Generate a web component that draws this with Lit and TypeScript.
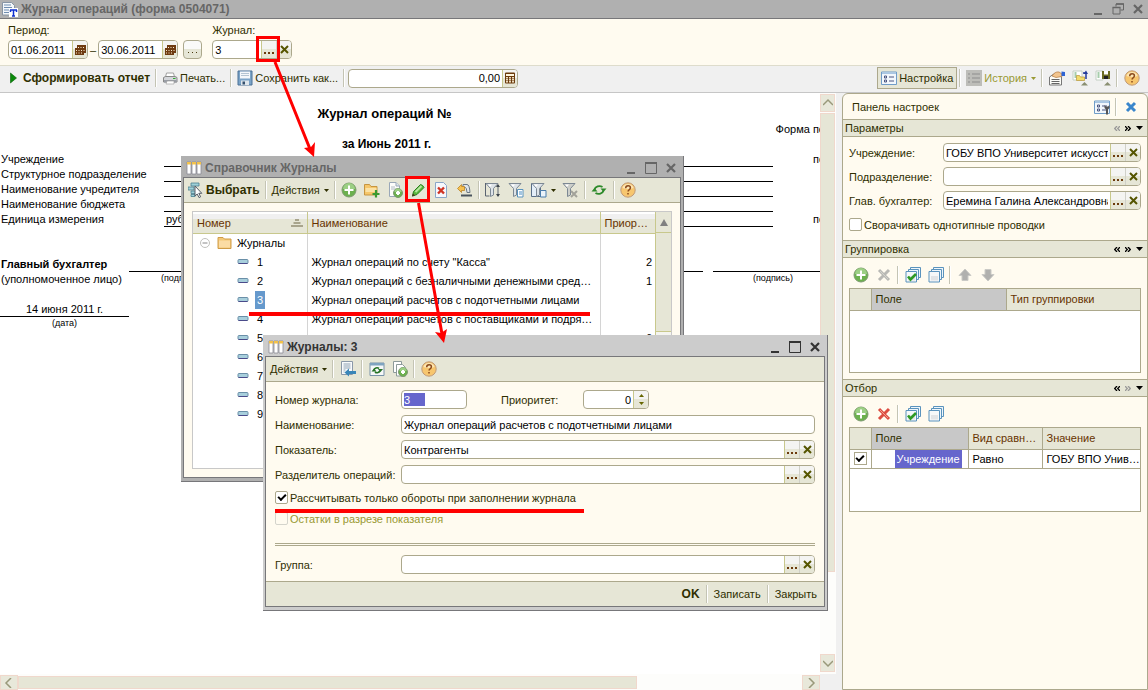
import { LitElement, html, svg, css, nothing, TemplateResult } from "lit";
import { customElement } from "lit/decorators.js";
import { classMap } from "lit/directives/class-map.js";

const icon = (content: unknown, w = 16) =>
  html`<svg class="icon" width=${w} height="16" viewBox="0 0 ${w} 16" aria-hidden="true">${content}</svg>`;

const plusDisc = (cx: number, cy: number, r: number) => svg`
  <circle cx=${cx} cy=${cy} r=${r} fill="#6cb04e" stroke="#7d9a70" />
  <path d="M${cx - r + 1} ${cy - 1}a${r - 1} ${r - 1} 0 0 1 ${2 * r - 2} 0z" fill="#9ccf84" />
  <path d="M${cx} ${cy - r + 2.5}V${cy + r - 2.5}M${cx - r + 2.5} ${cy}H${cx + r - 2.5}" stroke="#fff" stroke-width="2" />`;

const sheetPath = svg`<path d="M2.500 .5h6.500l3.500 3.500v10.500h-10z" fill="#fdfdfb" stroke="#9aa8b8" /><path d="M9 .5v3.500h3.500" fill="#dfe6ee" stroke="#9aa8b8" />`;
const funnel = (c: string) => svg`<path d="M1 1.500h12l-4.500 5v6.500l-3 1.500v-8z" fill=${c} stroke="#7c8894" /><path d="M3 2.500h4l-2 2.500z" fill="#fff" />`;
const stack = svg`
  <path d="M5.500 .5h10v10h-10z" fill="#eef6fb" stroke="#5a93bd" />
  <path d="M3.500 2.500h10v10h-10z" fill="#eef6fb" stroke="#5a93bd" />
  <path d="M1 4.500h10.500v10.500h-10.500z" fill="#f6f8f9" stroke="#5a93bd" />
  <path d="M3 9h7v4.500h-7z" fill="#e2e4e6" />`;
const listBox = svg`
  <path d="M.5 2h15v12.500h-15z" fill="#f2f7fc" stroke="#6f9cc8" />
  <path d="M1 2.500h14v1.500h-14z" fill="#a9c6e2" />
  <path d="M3.500 6h2v2h-2zM3.500 10h2v2h-2z" fill="none" stroke="#4a5580" />
  <path d="M8 7h5M8 11h5" stroke="#4a5580" />`;

const I = {
  report: svg`<path d="M.5 1.500h9l3 3v9.500h-12z" fill="#f4f7fa" stroke="#8794a4" /><path d="M2 4h7M2 6.500h8M2 9h6M2 11.500h5" stroke="#6f8db0" /><path d="M7 7h9v9h-9z" fill="#fff" /><path d="M8 9h7M11.500 9v6M10 15h3M8.500 9v2M14.500 9v2" stroke="#1030d0" stroke-width="1.500" />`,
  columns: svg`<path d="M1 2h4v12h-4zM6 2h4v12h-4zM11 2h4v12h-4z" fill="#fff" stroke="#8a8a94" stroke-width=".8" /><path d="M1 2h4v2.500h-4zM6 2h4v2.500h-4zM11 2h4v2.500h-4z" fill="#f3c24a" />`,
  run: svg`<path d="M5.500 3l6 5-6 5z" fill="#0a8a0a" stroke="#056005" stroke-width=".6" />`,
  printer: svg`<path d="M4.500 3h7l1 4h-9z" fill="#fff" stroke="#a0a0a0" /><path d="M1.500 7.500l2-1h9.500l2 1v4.500h-13.500z" fill="#d4d6da" stroke="#888" /><path d="M2 10h12.500v2.500h-12.500z" fill="#9a9ea6" /><path d="M5 11h7v3h-8z" fill="#fff" stroke="#999" stroke-width=".6" /><path d="M11 8.500h2.500" stroke="#3a3" />`,
  floppy: svg`<path d="M1 1h14v14h-14z" fill="#7ba4c8" stroke="#4a7096" /><path d="M3 1.500h10v7h-10z" fill="#f4f7fa" /><path d="M4 3.500h8M4 5.500h8" stroke="#b4c4d2" /><path d="M4 10.500h8v4.500h-8z" fill="#dfe6ec" /><path d="M5.500 11.500h2.500v3h-2.500z" fill="#34506e" />`,
  calc: svg`<path d="M3 3.500q0-1 1-1h8q1 0 1 1v9q0 1-1 1h-8q-1 0-1-1z" fill="#6b3a0c" /><path d="M4 4h8v2h-8z" fill="#fff6de" /><path d="M4 7h2v1.500h-2zM7 7h2v1.500h-2zM10 7h2v1.500h-2zM4 9h2v1.500h-2zM7 9h2v1.500h-2zM10 9h2v1.500h-2zM4 11h2v1.500h-2zM7 11h2v1.500h-2zM10 11h2v1.500h-2z" fill="#ecdcc0" />`,
  calendar: svg`<path d="M5 3h9v8h-2v2h-9v-7h2z" fill="#6e3a10" /><path d="M6 5h1v1h-1zM8.500 5h1v1h-1zM11 5h1v1h-1zM4 8h1v1h-1zM6.500 8h1v1h-1zM9 8h1v1h-1zM11.500 8h1v1h-1zM4 10.500h1v1h-1zM6.500 10.500h1v1h-1zM9 10.500h1v1h-1z" fill="#f6ead0" />`,
  settings: listBox,
  history: svg`<path d="M0 0h16v16h-16z" fill="#bdbdb9" /><path d="M2 4h2M2 8h2M2 12h2M6 4h8M6 8h8M6 12h8" stroke="#8d8d8d" stroke-width="1.200" />`,
  panelTools: svg`${listBox}<path d="M10.500 6v3l1.500 1.500v5h2v-5l1.500-1.500v-3l-1.500 1.500h-2z" fill="#555" />`,
  handForm: svg`<path d="M.5 7l5-3.500 7 3.500v8h-12z" fill="#fcfcf8" stroke="#777" /><path d="M2.500 9.500h8M2.500 11.500h8M2.500 13.500h8" stroke="#666" /><path d="M3 6c2-3 4-4.500 7-4l3 2v2.500l-6 1z" fill="#f2c48e" stroke="#b0763c" stroke-width=".7" /><path d="M12.500 1.500l3.500 .5v4h-3.500z" fill="#2e63d4" />`,
  loadForm: svg`<path d="M1 1h9v9h-9z" fill="#fff" stroke="#c4d0c4" /><path d="M2.500 3h2M2.500 5h2M2.500 7h2" stroke="#4f9a58" /><path d="M4.500 5.500h3l1 1.500h4v3.500h-8z" fill="#f3dc6c" stroke="#b8963a" stroke-width=".7" /><path d="M14 9v-6h-3" fill="none" stroke="#243c9c" stroke-width="1.500" /><path d="M11.500 4l2.500-3.500 2 3.500z" fill="#243c9c" /><path d="M9 15.500h7l-3.500-3.500z" fill="#8a8f72" />`,
  saveForm: svg`<path d="M1 1h7v9h-7z" fill="#fff" stroke="#c4d0c4" /><path d="M2.500 3h2M2.500 5h2M2.500 7h2" stroke="#4f9a58" /><path d="M7 1h8v8h-8z" fill="#6c6c22" /><path d="M9 1h4v3.500h-4z" fill="#fff" /><path d="M9 6h4v3h-4z" fill="#222" /><path d="M9 15.500h7l-3.500-3.500z" fill="#8a8f72" />`,
  help: svg`<circle cx="8" cy="8" r="7.200" fill="#f7c66e" stroke="#c09a78" /><path d="M2.500 6a5.800 5.800 0 0 1 11 0q-5 2-11 0z" fill="#fde6b4" /><path d="M5.700 6.200q0-2.400 2.400-2.400 2.300 0 2.300 2 0 1.300-1.300 2-1 .6-1 1.700M8 11v1.600" fill="none" stroke="#8a4a1c" stroke-width="1.500" />`,
  closeBlue: svg`<path d="M4 4l8 8M12 4l-8 8" stroke="#3a86cc" stroke-width="3" />`,
  add: plusDisc(8, 8, 7),
  crossGrey: svg`<path d="M3 3l10 10M13 3l-10 10" stroke="#b8b8b4" stroke-width="3" /><path d="M4 4l8 8" stroke="#d2d2cc" />`,
  crossRed: svg`<path d="M3 3l10 10M13 3l-10 10" stroke="#dc4c40" stroke-width="3" /><path d="M4 4l8 8" stroke="#f39a8c" />`,
  checkAll: svg`${stack}<path d="M3 9.500l2.500 3 5.500-5.500" fill="none" stroke="#2f9a24" stroke-width="2.600" />`,
  uncheckAll: stack,
  up: svg`<path d="M8 2l6 6.500h-3v5h-6v-5h-3z" fill="#b0b0ae" stroke="#cacac6" />`,
  down: svg`<path d="M8 14l6-6.500h-3v-5h-6v5h-3z" fill="#b0b0ae" stroke="#cacac6" />`,
  select: svg`<path d="M3 1h8v3h-8zM0 5h6v3h-6zM3 9h5v2.500h-5zM3 12.500h4v2h-4z" fill="#9fd0d8" stroke="#4a7f8f" stroke-width=".8" /><path d="M7 4v10l2.200-2 1.800 3.600 1.600-.8-1.800-3.500h3z" fill="#fff" stroke="#555c66" />`,
  folderAdd: svg`<path d="M.5 2.500h5l1.500 2h6v8.500h-12.500z" fill="#f6c76a" stroke="#c69540" /><path d="M1.500 6h11v4h-11z" fill="#fbe2a4" /><path d="M12 8v7.500M8.500 12h7" stroke="#3a9a30" stroke-width="2.200" />`,
  docAdd: svg`${sheetPath}<path d="M4 5h4M4 7h5" stroke="#b0bac4" />${plusDisc(11, 11, 4.5)}`,
  pencil: svg`<path d="M3.500 9.500l7-7q2.500 .5 3.500 3l-7 7-4.500 1.500z" fill="#58b83c" stroke="#2c7c1e" /><path d="M5.500 10l6-6" stroke="#b6e6a0" stroke-width="2" /><path d="M2 14.500l1-3 2 2z" fill="#4a3a20" />`,
  docDel: svg`<path d="M2.500 .5h8l3 3v12h-11z" fill="#f6f8fc" stroke="#8aa6c8" /><path d="M5 5.500l6 6M11 5.500l-6 6" stroke="#d03424" stroke-width="2.400" />`,
  reload: svg`<path d="M7 2.500h4q2.500 0 3 8h-3q-.5-5-1.500-5h-2.500z" fill="#dfe5ea" stroke="#6c7884" /><path d="M5 13.500h11" stroke="#4a545e" stroke-width="2" /><path d="M1.500 6.500l4-4v2h3v4h-3v2z" fill="#f6c04e" stroke="#b98428" stroke-width=".8" />`,
  funnelMove: svg`${funnel("#dde3e8")}<path d="M.5 1v13h4M13 3v11" fill="none" stroke="#5a6470" /><path d="M11 5l2-3 2 3zM11 12l2 3 2-3z" fill="#3c444c" />`,
  funnelDoc: svg`${funnel("#dde3e8")}<path d="M9.500 7.500h5.500v7.500h-5.500z" fill="#fff" stroke="#5a93bd" /><path d="M11 10h3M11 12h3" stroke="#4a8ec4" />`,
  funnelList: svg`<path d="M.5 1.500h9v13h-9z" fill="#e4eef8" stroke="#5a6f88" />${funnel("#dde3e8")}<path d="M9.500 8.500h5.500v6.500h-5.500z" fill="#eaf3fa" stroke="#4a7cab" />`,
  funnelOff: svg`${funnel("#cdcfca")}<path d="M9 9l6 6M15 9l-6 6" stroke="#a2a29a" stroke-width="2" />`,
  refresh: svg`<path d="M3.500 7.500a5 4 0 0 1 8-2.500M12.500 8.500a5 4 0 0 1-8 2.500" fill="none" stroke="#2d8a2a" stroke-width="1.800" /><path d="M9.500 6.500h6l-3 3.500zM.5 9.500h6l-3-3.500z" fill="#2d8a2a" />`,
  postBack: svg`<path d="M1.500 .5h11v13h-11z" fill="#f8fafc" stroke="#8a98a8" /><path d="M3.500 3h7M3.500 5h7M3.500 7h7M3.500 9h2M3.500 11h1" stroke="#8fa2b4" /><path d="M4.500 11.500l4.500-4v2.500h7v3h-7v2.500z" fill="#3a86b8" />`,
  formRefresh: svg`<path d="M1 2h14v12.500h-14z" fill="#f6f8f8" stroke="#7892a8" /><path d="M1 2h14v2.500h-14z" fill="#7fa4c0" /><path d="M5 9a3 2.500 0 0 1 5-1.500M11 9.500a3 2.500 0 0 1-5 1.500" fill="none" stroke="#267326" stroke-width="1.600" /><path d="M9 8h5l-2.500 3zM2.500 10.500h5l-2.500-3z" fill="#267326" />`,
  docsAdd: svg`<path d="M1.500 .5h8v11h-8z" fill="#fff" stroke="#8d9a9a" /><path d="M4.500 3.500h6l3 3v8.500h-9z" fill="#fff" stroke="#8d9a9a" />${plusDisc(11, 11, 4.5)}`,
  folder: svg`<path d="M1 2.500h5l1.500 1.500h6.500v9.500h-13z" fill="#f3c878" stroke="#cf9c48" /><path d="M2 5.500h11v7h-11z" fill="#fbdca4" />`,
  item: svg`<path d="M3 6.500q0-1 1-1h8q1 0 1 1v2q0 1-1 1h-8q-1 0-1-1z" fill="#a8cfdc" stroke="#6a8fa8" /><path d="M3.500 9.500h9" stroke="#4a4a8a" />`,
  collapse: svg`<circle cx="8" cy="8" r="4.500" fill="#fff" stroke="#c0c0bc" /><path d="M5.500 8h5" stroke="#888" />`,
};

const dots = html`<svg class="glyph" width="11" height="10" viewBox="0 0 11 10" aria-hidden="true"><path d="M0 7h2v2h-2zM4 7h2v2h-2zM8 7h2v2h-2z" fill="#6b3a0c" /></svg>`;
const smallDots = html`<svg class="glyph" width="9" height="10" viewBox="0 0 9 10" aria-hidden="true"><path d="M0 7h1v1h-1zM4 7h1v1h-1zM8 7h1v1h-1z" fill="#4a3a10" /></svg>`;
const cross = html`<svg class="glyph" width="9" height="9" viewBox="0 0 9 9" aria-hidden="true"><path d="M1 1l7 7M8 1l-7 7" stroke="#555500" stroke-width="2" /></svg>`;
const caret = html`<svg class="caret" width="5" height="3" viewBox="0 0 5 3" aria-hidden="true"><path d="M0 0h5L2.500 3z" fill="currentColor" /></svg>`;
const sep = html`<span class="sep"></span>`;

const tool = (title: string, glyph: unknown) => html`<button class="tool" title=${title}>${icon(glyph)}</button>`;

const windowButtons = (kind: "max" | "restore") => html`<span class="win-buttons">
  <button title="Свернуть"><svg width="12" height="12" viewBox="0 0 12 12"><path d="M2 11h8" stroke="currentColor" stroke-width="2" /></svg></button>
  <button title="Развернуть"><svg width="12" height="12" viewBox="0 0 12 12">${kind === "max"
    ? svg`<path d="M.5 1h11M.5 .5v11h11v-11" fill="none" stroke="currentColor" /><path d="M0 1h12" stroke="currentColor" stroke-width="2" />`
    : svg`<path d="M4 3.500v-2.500h7.500v6h-3M1 4.500h7v6.500h-7z" fill="none" stroke="currentColor" /><path d="M4 1h8M.5 4.500h8" stroke="currentColor" stroke-width="1.500" />`}</svg></button>
  <button title="Закрыть"><svg width="12" height="12" viewBox="0 0 12 12"><path d="M2 2l8 8M10 2l-8 8" stroke="currentColor" stroke-width="2.200" /></svg></button>
</span>`;

const field = (id: string, value: string, buttons: TemplateResult | typeof nothing = nothing, kind = "") =>
  html`<span class="field ${kind}"><input id=${id} type="text" .value=${value} />${buttons}</span>`;

const pickClear = html`<button class="in" title="Выбрать">${dots}</button><button class="in split" title="Очистить">${cross}</button>`;
const calendarButton = html`<button class="in" title="Календарь">${icon(I.calendar)}</button>`;

const journals: [string, string, string][] = [
  ["1", 'Журнал операций по счету "Касса"', "2"],
  ["2", "Журнал операций с безналичными денежными средствами", "1"],
  ["3", "Журнал операций расчетов с подотчетными лицами", ""],
  ["4", "Журнал операций расчетов с поставщиками и подрядчиками", ""],
  ["5", "", "6"],
  ["6", "", ""],
  ["7", "", ""],
  ["8", "", ""],
  ["9", "", ""],
];

@customElement("app-root")
export class AppRoot extends LitElement {
  static styles = css`
    :host {
      --ink: #2f2f00;
      --line: #aca88c;
      --cream: #fffbf0;
      --olive: #e6e6d6;
      display: flex;
      flex-direction: column;
      position: relative;
      min-height: 100vh;
      box-sizing: border-box;
      overflow: hidden;
      background: #f0f0f0;
      color: var(--ink);
      font: 11px/14px "Liberation Sans", Arial, sans-serif;
    }
    *, *::before { box-sizing: border-box; }
    button {
      display: inline-flex;
      align-items: center;
      justify-content: center;
      padding: 0;
      border: 0;
      background: none;
      color: inherit;
      font: inherit;
      white-space: nowrap;
    }
    svg { display: block; flex: none; }
    .bold { font-weight: bold; font-size: 12px; }
    .title {
      display: flex;
      flex: none;
      align-items: center;
      gap: 3px;
      height: 19px;
      padding: 0 0 0 2px;
      background: #b0b0b0;
      border-bottom: 1px solid #77777a;
      color: #666;
      font-weight: bold;
      font-size: 12px;
    }
    .title .name { flex: 1; }
    .win-buttons { display: flex; }
    .win-buttons button { width: 20px; height: 16px; }

    .period {
      display: flex;
      gap: 10px;
      height: 47px;
      padding: 4px 8px 6px;
      background: var(--cream);
      border-bottom: 1px solid #dedccc;
    }
    .group { display: flex; flex-direction: column; gap: 3px; }
    .inline { display: flex; align-items: center; gap: 2px; }
    .field {
      display: flex;
      height: 19px;
      min-width: 0;
      border: 1px solid var(--line);
      border-radius: 4px;
      background: #fff;
      overflow: hidden;
    }
    .field input {
      flex: 1;
      width: 0;
      min-width: 0;
      padding: 0 2px;
      border: 0;
      outline: 0;
      background: none;
      color: #000;
      font: inherit;
    }
    .in {
      width: 15px;
      border-left: 1px solid #c8c88c;
      background: linear-gradient(#f4f4f2 45%, var(--olive) 45%);
    }
    .in.split { border-left-color: #d0d0c8; }
    .date, .journal { width: 80px; }
    .right input { text-align: right; }
    .more {
      width: 19px;
      height: 19px;
      margin-left: 3px;
      border: 1px solid var(--line);
      border-radius: 4px;
      background: linear-gradient(#fafaf8 45%, var(--olive) 45%);
    }

    .bar { display: flex; flex: none; align-items: center; }
    .main-bar { height: 27px; padding: 0 5px 2px 2px; border-bottom: 1px solid #c6c6c6; }
    .spacer { flex: 1; }
    .sep {
      flex: none;
      width: 2px;
      height: 18px;
      margin: 0 2px;
      border-left: 1px solid #c4c4b4;
      border-right: 1px solid #fff;
    }
    .cmd { gap: 2px; height: 20px; padding: 0 3px; }
    .tool { width: 23px; height: 22px; }
    .caret { margin-left: 2px; }
    .amount { width: 170px; margin-left: 1px; }
    .pressed { height: 22px; border: 1px solid var(--line); background: var(--olive); }
    .off { color: #999933; }

    .work { flex: 1; display: flex; align-items: stretch; min-height: 0; }
    .report {
      flex: 1;
      min-width: 0;
      display: grid;
      grid-template: 1fr 16px / 1fr 16px;
      background: #fff;
    }
    .sheet {
      display: grid;
      grid-template-columns: 129px 35px 539px 10px 60px 52px;
      grid-template-rows: 14px;
      grid-auto-rows: 15px;
      overflow: hidden;
      color: #000;
      line-height: 14px;
      white-space: nowrap;
    }
    .lab { padding-left: 1px; grid-column: 1 / 3; }
    .rule { border-bottom: 1px solid #000; }
    .r1 { grid-row: 2; } .r2 { grid-row: 3; } .r3 { grid-row: 4; } .r4 { grid-row: 5; }
    .r5 { grid-row: 6; } .r6 { grid-row: 7; } .r7 { grid-row: 8; } .r8 { grid-row: 9; }
    .r11 { grid-row: 12; } .r12 { grid-row: 13; } .r14 { grid-row: 15; } .r15 { grid-row: 16; }
    .head { grid-column: 1 / 6; padding-right: 4px; text-align: center; font-weight: bold; font-size: 13px; }
    .subhead { padding: 0; font-size: 12px; }
    .value { grid-column: 3 / 6; padding-left: 2px; }
    .code { grid-column: 6; text-align: right; }
    .sign1 { grid-column: 2 / 4; }
    .sign2 { grid-column: 5 / 7; }
    .tiny { font-size: 9px; line-height: 12px; }
    .s1 { padding-left: 32px; }
    .s2 { padding-left: 40px; }
    .datecell { grid-column: 1; text-align: center; }
    .strong { font-weight: bold; }

    .vscroll, .hscroll { display: flex; background: #fdfdfb; }
    .vscroll { flex-direction: column; padding: 1px 1px 2px 0; }
    .hscroll { padding: 1px 0 0; }
    .vscroll button, .hscroll button { flex: none; background: #e8e8da; border: 1px solid #f0d8cc; }
    .vscroll button { height: 18px; }
    .hscroll button { width: 18px; }
    .thumb { background: #e6e6d6; border: 1px solid #f0d8cc; }
    .track { flex: 1; display: flex; flex-direction: inherit; padding: 1px 0; }
    .vscroll .thumb { height: 85%; }
    .hscroll .thumb { width: 79%; }
    .corner { background: #f0f0f0; }

    .panel {
      width: 306px;
      margin-left: 6px;
      border: 1px solid var(--line);
      border-radius: 6px 6px 0 0;
      background: var(--cream);
    }
    .panel-title { height: 25px; padding: 0 5px 0 9px; }
    .section {
      display: flex;
      align-items: center;
      gap: 5px;
      height: 18px;
      margin: 0;
      padding: 0 4px 0 2px;
      background: var(--olive);
      border: solid var(--line);
      border-width: 1px 0;
      font: inherit;
      color: var(--ink);
    }
    .section .name { flex: 1; }
    .params {
      display: grid;
      grid-template-columns: 94px 1fr;
      row-gap: 5px;
      align-items: center;
      padding: 6px;
    }
    .check { display: flex; align-items: center; gap: 2px; grid-column: 1 / -1; height: 19px; }
    .check input, .cellcheck {
      appearance: none;
      display: grid;
      place-content: center;
      width: 13px;
      height: 13px;
      margin: 0;
      border: 1px solid var(--line);
      border-radius: 2px;
      background: #fff;
    }
    .check input:checked::before, .cellcheck:checked::before {
      content: "";
      width: 8px;
      height: 5px;
      border: solid #000;
      border-width: 0 0 2px 2px;
      transform: rotate(-45deg);
      margin-bottom: 3px;
    }
    .cellcheck { margin: 0 auto; border-radius: 0; }
    .check input:disabled { border-color: #d4d4cc; background: var(--cream); }
    .panel-tools { height: 30px; padding: 4px 0 0 6px; }
    .listbox { margin: 0 6px 6px; border: 1px solid var(--line); background: #fff; height: 85px; }
    table { width: 100%; border-collapse: collapse; table-layout: fixed; }
    th, td { padding: 0; text-align: left; font-weight: normal; white-space: nowrap; overflow: hidden; text-overflow: ellipsis; }
    .grid th { height: 21px; padding-left: 4px; background: var(--olive); color: #663300; border-bottom: 1px solid var(--line); }
    .grid td { height: 19px; padding-left: 4px; color: #000; border-bottom: 1px solid var(--line); }
    .grid td:first-child { padding: 0; }
    .grid th + th, .grid td + td { border-left: 1px solid var(--line); }
    .grid .current { background: #c8c8c8; color: var(--ink); }
    .c21 { width: 21px; } .c135 { width: 135px; } .c97 { width: 97px; } .c74 { width: 74px; }
    .marked { display: inline-block; margin-left: 19px; padding: 2px; background: #6666cc; color: #fff; }

    .window {
      position: absolute;
      display: flex;
      flex-direction: column;
      padding: 0 2px 3px;
      background: #b0b0b0;
      border: solid #77777a;
      border-width: 0 1px 1px 0;
    }
    .window .title { height: 21px; padding: 2px 0 0 3px; background: none; border: 0; }
    .body { flex: 1; display: flex; flex-direction: column; border: 1px solid #77777a; background: var(--cream); }
    .catalog { left: 181px; top: 156px; width: 503px; height: 326px; }
    .element { left: 263px; top: 335px; width: 565px; height: 276px; background: #cccccc; }
    .element .title { color: #333; }
    .window .bar { height: 25px; padding: 0 1px; background: var(--olive); border-bottom: 1px solid var(--line); }
    .tree { display: flex; flex: 1; margin: 8px; border: 1px solid #c8c8c8; background: #fff; }
    .tree .list { flex: 1; min-width: 0; }
    .tree th {
      height: 21px;
      padding: 2px 4px 0;
      background: linear-gradient(#fff 10%, #f0f0f0 10% 35%, var(--olive) 35%);
      border-bottom: 1px solid #c8c88c;
      color: #663300;
    }
    .tree td { height: 19px; padding: 0 4px; color: #000; }
    .tree th + th { border-left: 1px solid #c8c88c; }
    .tree td + td { border-left: 1px solid #d4d4d4; }
    .tree td.num { text-align: right; padding-right: 3px; }
    .c114 { width: 114px; } .c55 { width: 55px; }
    .sorted { display: flex; justify-content: space-between; align-items: center; }
    .branch { display: flex; align-items: center; gap: 4px; }
    .leaf { display: flex; align-items: center; gap: 4px; padding-left: 38px; }
    .no { padding: 2px; }
    .no.current { background: #6699cc; color: #fff; }
    .tscroll { width: 16px; background: #f4f4f0; border-left: 1px solid #c8c88c; }
    .tscroll button { width: 100%; height: 21px; background: var(--olive); border-bottom: 1px solid #c8c88c; }
    .tthumb { height: 99px; background: var(--olive); border-bottom: 1px solid #c8c88c; }

    .form { display: grid; grid-template-columns: 126px 66px 34px 82px 66px 1fr; row-gap: 6px; align-items: center; padding: 8px 9px 0; }
    .form > label { grid-column: 1; }
    .wide { grid-column: 2 / -1; }
    .form > .prio { grid-column: 4; }
    .picked input { background: linear-gradient(#6666cc, #6666cc) 2px 2px / 21px 13px no-repeat; color: #fff; }
    .spin { display: flex; flex-direction: column; gap: 5px; }
    .form > .check { grid-column: 1 / -1; height: 15px; }
    .twin { grid-column: 1 / -1; height: 3px; margin: 11px 0 3px; border: solid var(--line); border-width: 1px 0; }
    .window .foot { justify-content: flex-end; margin-top: auto; padding-right: 3px; border: 0; border-top: 1px solid var(--line); }
    .foot button { padding: 0 4px; }

    .marks { position: absolute; left: 0; top: 0; pointer-events: none; }
  `;

  private section(name: string, left: boolean, right: boolean) {
    return html`<h2 class="section"><span class="name">${name}</span>
      <svg width="6" height="5" viewBox="0 0 6 5"><path d="M3 0L.7 2.500 3 5M6 0L3.700 2.500 6 5" fill="none" stroke=${left ? "#000" : "#999"} stroke-width="1.300" /></svg>
      <svg width="6" height="5" viewBox="0 0 6 5"><path d="M0 0l2.300 2.500L0 5M3 0l2.300 2.500L3 5" fill="none" stroke=${right ? "#000" : "#999"} stroke-width="1.300" /></svg>
      <svg width="7" height="4" viewBox="0 0 7 4"><path d="M0 0h7L3.500 4z" /></svg></h2>`;
  }

  private sheet() {
    const labels = ["Учреждение", "Структурное подразделение", "Наименование учредителя", "Наименование бюджета", "Единица измерения"];
    return html`<div class="sheet">
      <div class="head r1">Журнал операций №</div>
      <div class="code r2">Форма по</div>
      <div class="head subhead r3">за Июнь 2011 г.</div>
      ${labels.map((t, i) => html`<div class="lab r${i + 4}">${t}</div>
        <div class="value rule r${i + 4}">${i === 4 ? "руб" : nothing}</div>`)}
      <div class="code r4">по</div>
      <div class="code r8">по</div>
      <div class="lab strong r11">Главный бухгалтер</div>
      <div class="sign1 rule r11"></div>
      <div class="sign2 rule r11"></div>
      <div class="lab r12">(уполномоченное лицо)</div>
      <div class="sign1 tiny r12 s1">(подпись)</div>
      <div class="sign2 tiny r12 s2">(подпись)</div>
      <div class="datecell rule r14">14 июня 2011 г.</div>
      <div class="datecell tiny r15">(дата)</div>
    </div>`;
  }

  private catalog() {
    return html`<section class="window catalog" aria-label="Справочник Журналы">
      <div class="title">${icon(I.columns)}<span class="name">Справочник Журналы</span>${windowButtons("max")}</div>
      <div class="body">
        <div class="bar">
          <button class="cmd bold">${icon(I.select)}Выбрать</button>${sep}
          <button class="cmd">Действия ${caret}</button>${sep}
          ${tool("Добавить", I.add)}${tool("Новая группа", I.folderAdd)}${tool("Скопировать", I.docAdd)}${tool("Изменить", I.pencil)}
          ${tool("Пометить на удаление", I.docDel)}${tool("Переместить в группу", I.reload)}${sep}
          ${tool("Отбор и сортировка", I.funnelMove)}${tool("Отбор по значению", I.funnelDoc)}
          <button class="cmd">${icon(I.funnelList)}${caret}</button>
          ${tool("Отключить отбор", I.funnelOff)}${sep}${tool("Обновить", I.refresh)}${sep}${tool("Справка", I.help)}
        </div>
        <div class="tree">
          <div class="list"><table>
            <colgroup><col class="c114" /><col /><col class="c55" /></colgroup>
            <thead><tr>
              <th><span class="sorted">Номер<svg width="12" height="8" viewBox="0 0 12 8"><path d="M4 1h4M2.500 4h7M0 7h12" stroke="#a8a48c" stroke-width="2" /></svg></span></th>
              <th>Наименование</th><th>Приоритет</th>
            </tr></thead>
            <tbody>
              <tr><td><span class="branch">${icon(I.collapse)}${icon(I.folder)}<span>Журналы</span></span></td><td></td><td></td></tr>
              ${journals.map(([no, name, prio]) => html`<tr>
                <td><span class="leaf">${icon(I.item)}<span class=${classMap({ no: true, current: no === "3" })}>${no}</span></span></td>
                <td>${name}</td><td class="num">${prio}</td></tr>`)}
            </tbody>
          </table></div>
          <div class="tscroll"><button title="Вверх"><svg width="8" height="7" viewBox="0 0 8 7"><path d="M4 0l4 7h-8z" fill="#808080" /></svg></button><div class="tthumb"></div></div>
        </div>
      </div>
    </section>`;
  }

  private element() {
    return html`<section class="window element" aria-label="Журналы: 3">
      <div class="title">${icon(I.columns)}<span class="name">Журналы: 3</span>${windowButtons("max")}</div>
      <div class="body">
        <div class="bar">
          <button class="cmd">Действия ${caret}</button>${sep}${tool("Записать и закрыть", I.postBack)}${sep}
          ${tool("Перечитать", I.formRefresh)}${tool("Скопировать", I.docsAdd)}${sep}${tool("Справка", I.help)}
        </div>
        <div class="form">
          <label for="no">Номер журнала:</label>${field("no", "3", nothing, "picked")}
          <label class="prio" for="prio">Приоритет:</label>
          ${field("prio", "0", html`<button class="in" title="Изменить значение"><span class="spin">
            <svg width="5" height="3" viewBox="0 0 5 3"><path d="M0 3h5L2.500 0z" fill="#666600" /></svg>
            <svg width="5" height="3" viewBox="0 0 5 3"><path d="M0 0h5L2.500 3z" fill="#666600" /></svg></span></button>`, "right")}
          <label for="name">Наименование:</label>${field("name", "Журнал операций расчетов с подотчетными лицами", nothing, "wide")}
          <label for="ind">Показатель:</label>${field("ind", "Контрагенты", pickClear, "wide")}
          <label for="div">Разделитель операций:</label>${field("div", "", pickClear, "wide")}
          <label class="check"><input type="checkbox" checked />Рассчитывать только обороты при заполнении журнала</label>
          <label class="check off"><input type="checkbox" disabled />Остатки в разрезе показателя</label>
          <div class="twin"></div>
          <label for="grp">Группа:</label>${field("grp", "", pickClear, "wide")}
        </div>
        <div class="bar foot">
          <button class="bold">OK</button>${sep}<button>Записать</button>${sep}<button>Закрыть</button>
        </div>
      </div>
    </section>`;
  }

  private settings() {
    return html`<aside class="panel">
      <div class="bar panel-title"><span>Панель настроек</span><span class="spacer"></span>
        ${tool("Настройки панели", I.panelTools)}${sep}${tool("Закрыть", I.closeBlue)}</div>
      ${this.section("Параметры", false, true)}
      <div class="params">
        <label for="org">Учреждение:</label>${field("org", "ГОБУ ВПО Университет искусств", pickClear)}
        <label for="dep">Подразделение:</label>${field("dep", "", pickClear)}
        <label for="acc">Глав. бухгалтер:</label>${field("acc", "Еремина Галина Александровна", pickClear)}
        <label class="check"><input type="checkbox" />Сворачивать однотипные проводки</label>
      </div>
      ${this.section("Группировка", true, true)}
      <div class="bar panel-tools">${tool("Добавить", I.add)}${tool("Удалить", I.crossGrey)}${sep}
        ${tool("Установить флажки", I.checkAll)}${tool("Снять флажки", I.uncheckAll)}${sep}
        ${tool("Вверх", I.up)}${tool("Вниз", I.down)}</div>
      <div class="listbox"><table class="grid">
        <colgroup><col class="c21" /><col class="c135" /><col /></colgroup>
        <thead><tr><th></th><th class="current">Поле</th><th>Тип группировки</th></tr></thead>
      </table></div>
      ${this.section("Отбор", true, false)}
      <div class="bar panel-tools">${tool("Добавить", I.add)}${tool("Удалить", I.crossRed)}${sep}
        ${tool("Установить флажки", I.checkAll)}${tool("Снять флажки", I.uncheckAll)}</div>
      <div class="listbox"><table class="grid">
        <colgroup><col class="c21" /><col class="c97" /><col class="c74" /><col /></colgroup>
        <thead><tr><th></th><th class="current">Поле</th><th>Вид сравнения</th><th>Значение</th></tr></thead>
        <tbody><tr><td><input class="cellcheck" type="checkbox" checked aria-label="Использовать" /></td>
          <td><span class="marked">Учреждение</span></td><td>Равно</td><td>ГОБУ ВПО Университет</td></tr></tbody>
      </table></div>
    </aside>`;
  }

  render() {
    const chevron = (d: string) => html`<svg width="10" height="10" viewBox="0 0 10 10" aria-hidden="true"><path d=${d} fill="none" stroke="#99997a" stroke-width="1.500" /></svg>`;
    return html`
      <header class="title">${icon(I.report)}<span class="name">Журнал операций (форма 0504071)</span>${windowButtons("restore")}</header>
      <div class="period">
        <div class="group"><label for="from">Период:</label>
          <div class="inline">${field("from", "01.06.2011", calendarButton, "date")}<span>–</span>${field("to", "30.06.2011", calendarButton, "date")}
            <button class="more" title="Выбрать период">${smallDots}</button></div></div>
        <div class="group"><label for="jr">Журнал:</label>${field("jr", "3", pickClear, "journal")}</div>
      </div>
      <div class="bar main-bar">
        <button class="cmd bold">${icon(I.run)}Сформировать отчет</button>${sep}
        <button class="cmd">${icon(I.printer)}Печать...</button>${sep}
        <button class="cmd">${icon(I.floppy)}Сохранить как...</button>${sep}
        ${field("sum", "0,00", html`<button class="in" title="Калькулятор">${icon(I.calc)}</button>`, "amount right")}
        <span class="spacer"></span>
        <button class="cmd pressed">${icon(I.settings)}Настройка</button>${sep}
        <button class="cmd off">${icon(I.history)}История${caret}</button>${sep}
        ${tool("Параметры", I.handForm)}${tool("Загрузить", I.loadForm)}${tool("Сохранить", I.saveForm)}${sep}${tool("Справка", I.help)}
      </div>
      <main class="work">
        <div class="report">
          ${this.sheet()}
          <div class="vscroll"><button title="Вверх">${chevron("M0 7l5-5 5 5")}</button><div class="track"><div class="thumb"></div></div><button title="Вниз">${chevron("M0 3l5 5 5-5")}</button></div>
          <div class="hscroll"><button title="Влево">${chevron("M7 0l-5 5 5 5")}</button><div class="track"><div class="thumb"></div></div><button title="Вправо">${chevron("M3 0l5 5-5 5")}</button></div>
          <div class="corner"></div>
        </div>
        ${this.settings()}
      </main>
      ${this.catalog()} ${this.element()}
      <svg class="marks" width="840" height="620" viewBox="0 0 840 620" aria-hidden="true">
        <g fill="none" stroke="#f00" stroke-width="3">
          <path d="M257.500 37.500h21v23h-21zM275 62L310 149M406.500 177.500h22v23h-22zM418.500 203L442 334" />
          <path d="M249 314h341M275 511h309" stroke-width="4" />
        </g>
        <path d="M314 157l-10-9 7-1 4-5zM444 343l-9-11 6 1 6-4z" fill="#f00" />
      </svg>`;
  }
}
